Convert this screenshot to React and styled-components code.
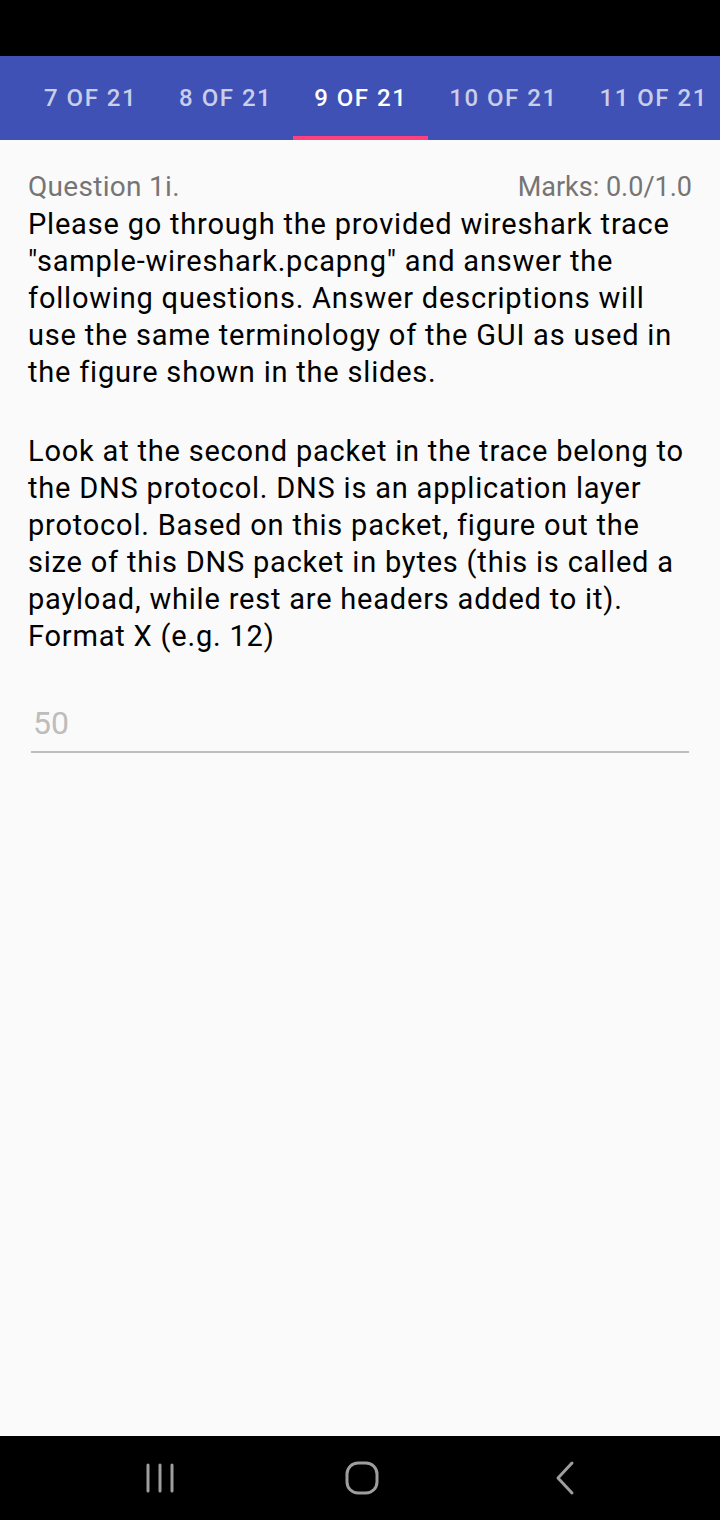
import React from "react";
import styled, { createGlobalStyle } from "styled-components";

const Global = createGlobalStyle`
  html, body { margin: 0; padding: 0; background: #fafafa; }
  body { font-family: Roboto, "Noto Sans", sans-serif; }
  * { box-sizing: border-box; }
`;

const Screen = styled.div`
  width: 720px;
  height: 1520px;
  display: flex;
  flex-direction: column;
  background: #fafafa;
  overflow: hidden;
`;

const StatusBar = styled.div`
  height: 56px;
  background: #000;
  flex: none;
`;

const TabBar = styled.nav`
  height: 84px;
  flex: none;
  background: #3f51b5;
  display: flex;
  align-items: stretch;
  padding-left: 23px;
  overflow: hidden;
  white-space: nowrap;
`;

const Tab = styled.div`
  position: relative;
  flex: none;
  display: flex;
  align-items: center;
  justify-content: center;
  padding: 0 21px;
  font-family: Roboto, sans-serif;
  font-weight: 500;
  font-size: 24px;
  letter-spacing: 1.5px;
  color: ${(p) => (p.$active ? "#ffffff" : "rgba(255,255,255,0.72)")};
  &::after {
    content: "";
    display: ${(p) => (p.$active ? "block" : "none")};
    position: absolute;
    left: 0;
    right: 0;
    bottom: 0;
    height: 4px;
    background: #ff4081;
  }
`;

const Content = styled.main`
  flex: 1;
  padding: 28px 28px 0 28px;
  display: flex;
  flex-direction: column;
`;

const HeaderRow = styled.div`
  display: flex;
  justify-content: space-between;
  align-items: baseline;
  line-height: 37px;
  color: #757575;
`;

const HeaderText = styled.span`
  font-size: ${(p) => p.$size}px;
  letter-spacing: ${(p) => p.$spacing}px;
`;

const Body = styled.p`
  margin: ${(p) => (p.$gap ? "42px" : "0")} 0 0 0;
  font-size: 29px;
  letter-spacing: 0.8px;
  line-height: 37px;
  color: #000;
`;

const Field = styled.div`
  margin: 48px 3px 0 3px;
  border-bottom: 2px solid #bdbdbd;
  padding: 0 2px 8px 2px;
  font-size: 32px;
  line-height: 40px;
  color: #bdbdbd;
`;

const NavBar = styled.div`
  height: 84px;
  flex: none;
  background: #000;
  display: flex;
  align-items: center;
  justify-content: space-between;
  padding: 0 137px 0 140px;
`;

const NavIcon = styled.svg`
  width: 40px;
  height: 40px;
  display: block;
`;

const tabs = ["7 OF 21", "8 OF 21", "9 OF 21", "10 OF 21", "11 OF 21"];

export default function App() {
  return (
    <>
      <Global />
      <Screen>
        <StatusBar />
        <TabBar>
          {tabs.map((t) => (
            <Tab key={t} $active={t === "9 OF 21"}>
              {t}
            </Tab>
          ))}
        </TabBar>
        <Content>
          <HeaderRow>
            <HeaderText $size={28} $spacing={0.3}>Question 1i.</HeaderText>
            <HeaderText $size={27} $spacing={0}>Marks: 0.0/1.0</HeaderText>
          </HeaderRow>
          <Body>
            Please go through the provided wireshark trace "sample-wireshark.pcapng" and answer the following questions. Answer descriptions will use the same terminology of the GUI as used in the figure shown in the slides.
          </Body>
          <Body $gap>
            Look at the second packet in the trace belong to the DNS protocol. DNS is an application layer protocol. Based on this packet, figure out the size of this DNS packet in bytes (this is called a payload, while rest are headers added to it). Format X (e.g. 12)
          </Body>
          <Field>50</Field>
        </Content>
        <NavBar>
          <NavIcon viewBox="0 0 40 40">
            <g stroke="#9e9e9e" strokeWidth="3" strokeLinecap="round">
              <line x1="8" y1="7" x2="8" y2="33" />
              <line x1="20" y1="7" x2="20" y2="33" />
              <line x1="32" y1="7" x2="32" y2="33" />
            </g>
          </NavIcon>
          <NavIcon viewBox="0 0 40 40">
            <rect x="5" y="5" width="30" height="30" rx="11" fill="none" stroke="#9e9e9e" strokeWidth="3" />
          </NavIcon>
          <NavIcon viewBox="0 0 40 40">
            <polyline points="29,5 15,20 29,35" fill="none" stroke="#9e9e9e" strokeWidth="3" strokeLinecap="round" strokeLinejoin="round" />
          </NavIcon>
        </NavBar>
      </Screen>
    </>
  );
}
